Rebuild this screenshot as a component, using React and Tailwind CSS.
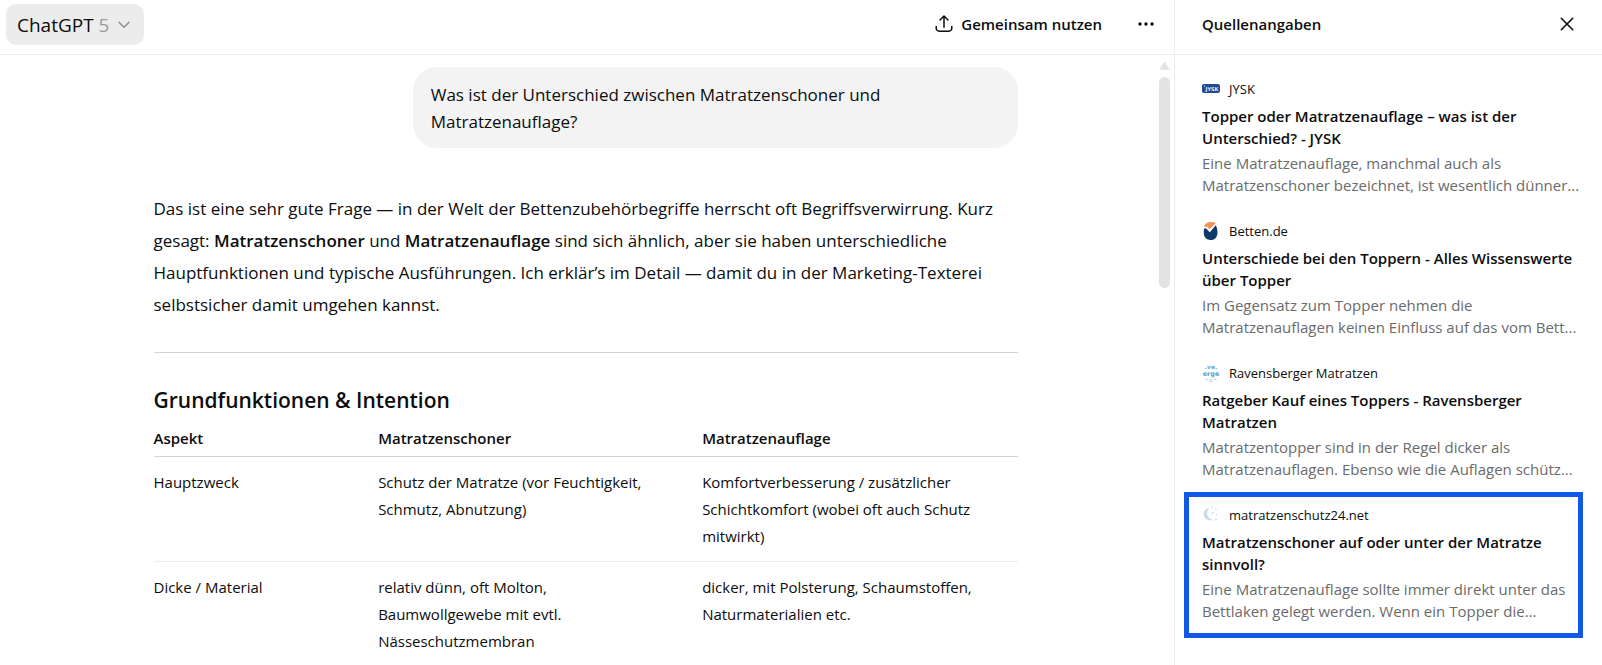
const sources = [
  {
    site: "JYSK",
    icon: <JyskIcon />,
    title: "Topper oder Matratzenauflage – was ist der Unterschied? - JYSK",
    text: ["Eine Matratzenauflage, manchmal auch als", "Matratzenschoner bezeichnet, ist wesentlich dünner..."],
  },
  {
    site: "Betten.de",
    icon: <BettenIcon />,
    title: "Unterschiede bei den Toppern - Alles Wissenswerte über Topper",
    text: ["Im Gegensatz zum Topper nehmen die", "Matratzenauflagen keinen Einfluss auf das vom Bett..."],
  },
  {
    site: "Ravensberger Matratzen",
    icon: <RavensbergerIcon />,
    title: "Ratgeber Kauf eines Toppers - Ravensberger Matratzen",
    text: ["Matratzentopper sind in der Regel dicker als", "Matratzenauflagen. Ebenso wie die Auflagen schütz..."],
  },
  {
    site: "matratzenschutz24.net",
    icon: <MoonIcon />,
    title: "Matratzenschoner auf oder unter der Matratze sinnvoll?",
    text: ["Eine Matratzenauflage sollte immer direkt unter das", "Bettlaken gelegt werden. Wenn ein Topper die..."],
    highlighted: true,
  },
];

const rows = [
  {
    aspect: "Hauptzweck",
    schoner: "Schutz der Matratze (vor Feuchtigkeit, Schmutz, Abnutzung)",
    auflage: "Komfortverbesserung / zusätzlicher Schichtkomfort (wobei oft auch Schutz mitwirkt)",
  },
  {
    aspect: "Dicke / Material",
    schoner: "relativ dünn, oft Molton, Baumwollgewebe mit evtl. Nässeschutzmembran",
    auflage: "dicker, mit Polsterung, Schaumstoffen, Naturmaterialien etc.",
  },
];

function JyskIcon() {
  return (
    <svg viewBox="0 0 18 18" className="size-[18px] font-['DejaVu_Sans',sans-serif]" aria-hidden="true">
      <rect y="4" width="18" height="9" rx="2" fill="#1f4a97" />
      <circle cx="2.6" cy="6.2" r="0.8" fill="#a9bfe2" />
      <text x="10" y="10.500" textAnchor="middle" fontSize="5" fontWeight="700" fill="#e8eefa">
        JYSK
      </text>
    </svg>
  );
}

function BettenIcon() {
  return (
    <svg viewBox="0 0 18 18" className="size-[18px]" aria-hidden="true">
      <path d="M2 5C2.500 2 5.500 0 9 0c2 0 3.600.4 4.600 1.400L7.500 7.200 5.200 4.800z" fill="#f4935a" />
      <path d="M1.800 7.200l1.800-1.200L7.800 10.200 13.800 3.200c1.100 2 1.700 4.800 1.700 7.500 0 4-2.500 7.300-6.800 7.300S1.800 15 1.800 11z" fill="#0d3a68" />
    </svg>
  );
}

function RavensbergerIcon() {
  return (
    <svg viewBox="0 0 18 18" className="size-[18px] font-['DejaVu_Sans',sans-serif]" aria-hidden="true">
      <text x="9" y="4.500" textAnchor="middle" fontSize="6" fontWeight="700" fill="#6fa9c4">
        .ve.
      </text>
      <text x="9" y="12" textAnchor="middle" fontSize="6.500" fontWeight="700" fill="#5d9dbd">
        erge
      </text>
      <path d="M3.500 15.500h2M7 16.500l1.500-1 1.500 1M12 15.500h2.500M7 17.800h4" stroke="#a9c6d4" strokeWidth="0.9" fill="none" />
    </svg>
  );
}

function MoonIcon() {
  return (
    <svg viewBox="0 0 18 18" className="size-[18px]" aria-hidden="true">
      <path d="M7.500 2A6.200 6.200 0 1 0 11 13.500 6.500 6.500 0 0 1 7.500 2z" fill="#c9daf2" />
      <g fill="#d8e3f4">
        <circle cx="10" cy="1.500" r="1" />
        <circle cx="14" cy="3.500" r="1" />
        <circle cx="11" cy="7" r="1.200" />
        <circle cx="14.500" cy="9" r="0.900" />
        <circle cx="14" cy="13.500" r="1.200" />
      </g>
    </svg>
  );
}

function ShareIcon() {
  return (
    <svg viewBox="0 0 18 18" className="size-[18px]" fill="none" stroke="currentColor" strokeWidth="1.500" strokeLinecap="round" strokeLinejoin="round" aria-hidden="true">
      <path d="M9 12.200V1.200M5 5l4-4 4 4M1.200 11.500v1.700A3 3 0 0 0 4.200 16.200h9.600a3 3 0 0 0 3-3v-1.700" />
    </svg>
  );
}

function Header() {
  return (
    <header className="flex h-[55px] items-center justify-between border-b border-[#ededed] pl-1.5 pr-[18px] pb-1.5">
      <button type="button" className="flex h-[41px] items-center rounded-[10px] bg-[#ececec] px-[11px] pt-0.5 text-[19px]">
        <span>
          ChatGPT <span className="text-[#9b9b9b]">5</span>
        </span>
        <svg viewBox="0 0 12 8" className="ml-[9px] mr-[3px] h-2 w-3" fill="none" stroke="#8f8f8f" strokeWidth="1.500" strokeLinecap="round" aria-hidden="true">
          <path d="M1 1.200l5 5 5-5" />
        </svg>
      </button>
      <div className="flex items-center gap-[34px]">
        <button type="button" className="flex items-center gap-2 text-[15px] font-semibold">
          <ShareIcon />
          Gemeinsam nutzen
        </button>
        <button type="button" aria-label="Mehr" className="flex h-9 items-center">
          <svg viewBox="0 0 20 6" className="h-1.5 w-5" fill="currentColor" aria-hidden="true">
            <circle cx="4" cy="3" r="1.700" />
            <circle cx="10" cy="3" r="1.700" />
            <circle cx="16" cy="3" r="1.700" />
          </svg>
        </button>
      </div>
    </header>
  );
}

function Scrollbar() {
  return (
    <div className="flex w-[11px] flex-col items-center gap-[7px] pt-1.5" aria-hidden="true">
      <svg viewBox="0 0 12 9" className="h-[9px] w-[11px]" fill="#e3e3e3">
        <path d="M6 0l6 9H0z" />
      </svg>
      <div className="h-[211px] w-[11px] rounded-full bg-[#e3e3e3]" />
    </div>
  );
}

function Answer() {
  return (
    <article className="mt-[45px] text-[17px] leading-[32px]">
      <p>
        Das ist eine sehr gute Frage — in der Welt der Bettenzubehörbegriffe herrscht oft Begriffsverwirrung. Kurz
        gesagt: <strong className="font-semibold">Matratzenschoner</strong> und{" "}
        <strong className="font-semibold">Matratzenauflage</strong> sind sich ähnlich, aber sie haben unterschiedliche
        Hauptfunktionen und typische Ausführungen. Ich erklär’s im Detail — damit du in der Marketing-Texterei
        selbstsicher damit umgehen kannst.
      </p>
      <hr className="mt-[31px] border-[#d4d4d4]" />
      <h3 className="mt-[31px] text-[21px] leading-[32px] font-semibold">Grundfunktionen &amp; Intention</h3>
      <table className="mt-[9px] w-full table-fixed text-left text-[15px] leading-[27px]">
        <thead>
          <tr className="border-b border-[#d4d4d4]">
            <th className="w-[26%] pb-1 font-semibold">Aspekt</th>
            <th className="w-[37.5%] pb-1 font-semibold">Matratzenschoner</th>
            <th className="pb-1 font-semibold">Matratzenauflage</th>
          </tr>
        </thead>
        <tbody>
          {rows.map((row) => (
            <tr key={row.aspect} className="border-b border-[#ededed] align-top">
              <td className="pt-3 pb-[11px]">{row.aspect}</td>
              <td className="pt-3 pr-11 pb-[11px]">{row.schoner}</td>
              <td className="pt-3 pr-7 pb-[11px]">{row.auflage}</td>
            </tr>
          ))}
        </tbody>
      </table>
    </article>
  );
}

function Source({ source }) {
  return (
    <li className={source.highlighted ? "pt-2 pr-1 pb-[11px] pl-[13px] outline-[5px] outline-[#0f58e8]" : "pt-2 pr-1 pb-[11px] pl-[13px]"}>
      <a href="#" className="block text-[15px] leading-[22px]">
        <span className="flex items-center gap-[9px] text-[13px] leading-5">
          {source.icon}
          {source.site}
        </span>
        <span className="mt-1.5 block font-semibold">{source.title}</span>
        <span className="mt-[3px] block whitespace-nowrap text-[#6b6b6b]">
          {source.text[0]}
          <br />
          {source.text[1]}
        </span>
      </a>
    </li>
  );
}

export default function App() {
  return (
    <div className="flex h-screen overflow-hidden bg-white font-['Open_Sans',sans-serif] text-[#0d0d0d]">
      <div className="flex min-w-0 flex-1 flex-col">
        <Header />
        <div className="flex min-h-0 flex-1 pr-1">
          <main className="min-w-0 flex-1 overflow-hidden pt-3 pr-4 pl-7">
            <div className="mx-auto w-full max-w-[864px]">
              <div className="ml-auto w-[70%] rounded-[24px] bg-[#f3f3f3] px-[18px] pt-3.5 pb-[13px] text-[17px] leading-[27px]">
                Was ist der Unterschied zwischen Matratzenschoner und Matratzenauflage?
              </div>
              <Answer />
            </div>
          </main>
          <Scrollbar />
        </div>
      </div>
      <aside className="w-[428px] shrink-0 border-l border-[#ededed]">
        <div className="flex h-[55px] items-center justify-between border-b border-[#ededed] pr-7 pb-1.5 pl-[27px]">
          <h2 className="text-[15px] font-semibold">Quellenangaben</h2>
          <button type="button" aria-label="Schließen">
            <svg viewBox="0 0 14 14" className="size-3.5" fill="none" stroke="currentColor" strokeWidth="1.600" strokeLinecap="round" aria-hidden="true">
              <path d="M1.300 1.300l11.400 11.400M12.700 1.300L1.300 12.700" />
            </svg>
          </button>
        </div>
        <ul className="flex flex-col gap-1.5 pt-4 pr-6 pl-3.5">
          {sources.map((source) => (
            <Source key={source.site} source={source} />
          ))}
        </ul>
      </aside>
    </div>
  );
}
